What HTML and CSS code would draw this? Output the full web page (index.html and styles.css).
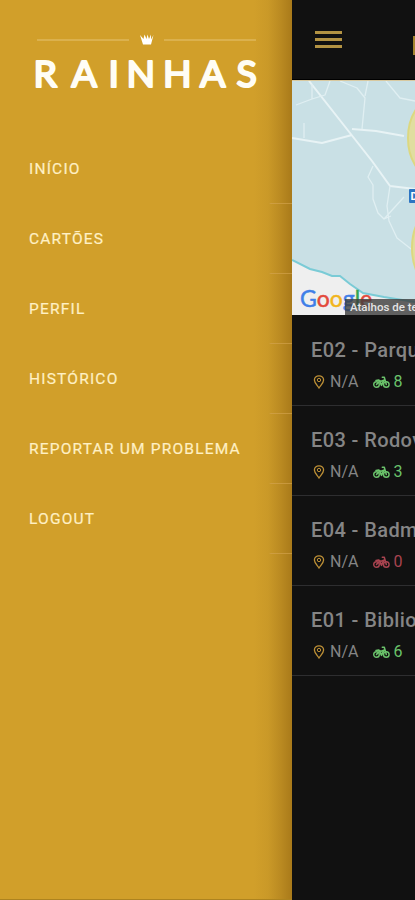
FILE: index.html
```html
<!DOCTYPE html>
<html lang="pt">
<head>
  <meta charset="UTF-8" />
  <meta name="viewport" content="width=device-width, initial-scale=1.0" />
  <title>Rainhas</title>
  <link rel="stylesheet" href="styles.css">
</head>
<body>
  <!-- Shared icons -->
  <svg class="sprite" width="0" height="0">
    <symbol id="pin" viewBox="0 0 12 14">
      <path d="M6 13C4.500 10.500 1.400 8 1.400 5a4.600 4.200 0 0 1 9.200 0C10.600 8 7.500 10.500 6 13Z" fill="none" stroke="currentColor" stroke-width="1.300" />
      <circle cx="6" cy="5" r="1.700" fill="none" stroke="currentColor" stroke-width="1" />
    </symbol>
    <symbol id="bike" viewBox="0 0 17 13">
      <g fill="none" stroke="currentColor" stroke-linecap="round" stroke-linejoin="round">
        <circle cx="3.500" cy="8.500" r="2.800" stroke-width="1.400" />
        <circle cx="13.300" cy="8.500" r="2.800" stroke-width="1.400" />
        <path d="M3 4.500L5.500 4 8 5.300 11.500 4M3.500 8.500L5.500 6M9.300 1.200H11.300L13.300 8.500" stroke-width="1.500" />
        <path d="M6.500 5.200L8.500 9.200 10.500 4.800" stroke-width="1.800" />
      </g>
    </symbol>
  </svg>

  <div class="app">
    <nav class="sidebar">
      <svg class="logo" width="232" height="64" viewBox="0 0 232 64">
        <path class="logo-line" d="M7 10H99M134 10H226" />
        <path class="crown" d="M110 5L113.500 9 114.500 4.500 116.500 9 117.500 4.500 119 9 121 4.500 121 9.500 123.500 5 121 14.500H113Z" />
        <text class="logo-text" x="3.500 41.500 78.500 96.500 133 170 206.500" y="57">RAINHAS</text>
      </svg>
      <ul class="menu">
        <li><a href="#">INÍCIO</a></li>
        <li><a href="#">CARTÕES</a></li>
        <li><a href="#">PERFIL</a></li>
        <li><a href="#">HISTÓRICO</a></li>
        <li><a href="#">REPORTAR UM PROBLEMA</a></li>
        <li><a href="#">LOGOUT</a></li>
      </ul>
    </nav>

    <main class="page">
      <header class="topbar">
        <button class="burger" aria-label="Menu"><span></span><span></span><span></span></button>
        <span class="brand"></span>
      </header>

      <section class="map">
        <svg width="123" height="235" viewBox="0 0 123 235">
          <rect width="123" height="235" fill="#c9e0e5" />
          <path d="M0 179L18 188 30 191 40 195H48L58 203 71 212 92 216 123 221V235H0Z" fill="#efefef" />
          <path class="coast" d="M0 179L18 188 30 191 40 195H48L58 203 71 212 92 216 123 221" />
          <g class="roads">
            <path class="wide" d="M17 0L58 52 80 80 98 105 123 108M0 57L30 62 60 54M60 48L84 50 112 55" />
            <path d="M48 0L65 7 73 17 70 48M76 0L73 15M38 0L33 14 20 18 4 24M20 3V18M12 42V57M94 0L108 17 123 20M81 85L76 96 81 104V118L86 132 92 138 112 116M98 105L95 125 97 140 105 157 123 171M92 138L99 135" />
          </g>
          <ellipse class="zone" cx="140" cy="57" rx="24" ry="38" />
          <ellipse class="zone" cx="142" cy="167" rx="22" ry="38" />
          <rect x="117" y="108" width="14" height="14" rx="1" fill="#2d75c2" />
          <text class="pin-label" x="118.500" y="119">D</text>
        </svg>
        <div class="google"><span class="b">G</span><span class="r">o</span><span class="y">o</span><span class="b">g</span><span class="g">l</span><span class="r">e</span></div>
        <div class="shortcuts">Atalhos de teclado</div>
      </section>

      <section class="stations">
        <article class="station">
          <h2>E02 - Parque</h2>
          <p><svg class="pin"><use href="#pin" /></svg><span>N/A</span><svg class="bike free"><use href="#bike" /></svg><span class="free">8</span></p>
        </article>
        <article class="station">
          <h2>E03 - Rodoviária</h2>
          <p><svg class="pin"><use href="#pin" /></svg><span>N/A</span><svg class="bike free"><use href="#bike" /></svg><span class="free">3</span></p>
        </article>
        <article class="station">
          <h2>E04 - Badminton</h2>
          <p><svg class="pin"><use href="#pin" /></svg><span>N/A</span><svg class="bike empty"><use href="#bike" /></svg><span class="empty">0</span></p>
        </article>
        <article class="station">
          <h2>E01 - Biblioteca</h2>
          <p><svg class="pin"><use href="#pin" /></svg><span>N/A</span><svg class="bike free"><use href="#bike" /></svg><span class="free">6</span></p>
        </article>
      </section>
    </main>
  </div>
</body>
</html>
```
FILE: styles.css
```css
:root {
  --gold: #d19f2a;
  --dark: #111111;
  --grey: #858585;
  --green: #6bc36b;
  --red: #a94450;
}
* {
  padding: 0;
  margin: 0;
  box-sizing: border-box;
}
body {
  background-color: var(--dark);
  font-family: Roboto, sans-serif;
  overflow: hidden;
}
.sprite {
  position: absolute;
}
.app {
  display: flex;
  height: 900px;
  width: 415px;
  overflow: hidden;
}

/* Side menu */
.sidebar {
  width: 292px;
  flex-shrink: 0;
  padding-top: 30px;
  background: linear-gradient(to right, var(--gold) 254px, #ca9928 268px, #bb8b22 280px, #a97a1a 292px);
  border-bottom: 1px solid #ad831f;
}
.logo {
  display: block;
  margin-left: 30px;
}
.logo-line {
  stroke: #e5c372;
  stroke-width: 1;
}
.crown {
  fill: #fff;
}
.logo-text {
  font-family: Lato, sans-serif;
  font-size: 37.5px;
  font-weight: 400;
  fill: #fffdf5;
  stroke: #fffdf5;
  stroke-width: 2.2;
  stroke-linejoin: round;
}
.menu {
  list-style: none;
  margin-top: 40px;
}
.menu li {
  height: 70px;
  padding-left: 29px;
  display: flex;
  align-items: center;
  border-bottom: 1px solid;
  border-image: linear-gradient(to right, transparent 268px, #cf9f41 270px, #c4943a 292px) 1;
}
.menu a {
  color: #fff0c4;
  font-size: 15.5px;
  letter-spacing: 1.2px;
  text-decoration: none;
  white-space: nowrap;
  -webkit-text-stroke: 0.2px;
}

/* Page behind the menu */
.page {
  width: 415px;
  flex-shrink: 0;
}
.topbar {
  height: 80px;
  display: flex;
  align-items: center;
  padding-left: 23px;
  border-bottom: 1px solid #000;
}
.burger {
  width: 27px;
  display: flex;
  flex-direction: column;
  gap: 4px;
  background: none;
  border: none;
}
.burger span {
  height: 3px;
  background-color: #b39343;
}
.brand {
  width: 60px;
  height: 19px;
  margin: 12px 0 0 71px;
  background-color: #a4842f;
}
.map {
  position: relative;
  height: 235px;
  border-top: 1px solid #d8c9a0;
  overflow: hidden;
}
.map svg {
  display: block;
}
.coast {
  fill: none;
  stroke: #7acbd6;
  stroke-width: 2;
}
.roads {
  fill: none;
  stroke: #e0eff2;
  stroke-width: 1.3;
  stroke-linejoin: round;
}
.roads .wide {
  stroke: #e8f3f5;
  stroke-width: 2;
}
.zone {
  fill: #e0dea0;
  stroke: #dcd880;
  stroke-width: 2;
}
.pin-label {
  font-size: 11px;
  font-weight: 700;
  fill: #fff;
}
.google {
  position: absolute;
  left: 8px;
  bottom: 4px;
  font-family: Lato, sans-serif;
  font-size: 23px;
  line-height: 26px;
}
.google .b { color: #3f7fe8; }
.google .r { color: #e34a3c; }
.google .y { color: #f2b51c; }
.google .g { color: #35a652; }
.google span {
  -webkit-text-stroke: 0.5px;
}
.shortcuts {
  position: absolute;
  left: 53px;
  bottom: 0;
  width: 110px;
  height: 16px;
  padding-left: 5px;
  background-color: rgba(60, 60, 60, 0.8);
  color: #e4e4e4;
  font-size: 11.5px;
  font-weight: 500;
  line-height: 16px;
  white-space: nowrap;
}
.stations {
  padding-top: 1px;
}
.station {
  height: 90px;
  padding: 22px 0 0 19px;
  border-bottom: 1px solid #2e2e30;
}
.station h2 {
  color: var(--grey);
  font-size: 20px;
  font-weight: 500;
  line-height: 24px;
  letter-spacing: 0.4px;
  white-space: nowrap;
}
.station p {
  display: flex;
  align-items: center;
  margin-top: 9px;
  color: var(--grey);
  font-size: 16px;
  line-height: 22px;
}
.pin {
  width: 12px;
  height: 14px;
  margin: 0 5px 0 2px;
  color: #bd9036;
}
.bike {
  width: 17px;
  height: 13px;
  margin: 0 3px 0 15px;
}
.free {
  color: var(--green);
}
.empty {
  color: var(--red);
}
```
